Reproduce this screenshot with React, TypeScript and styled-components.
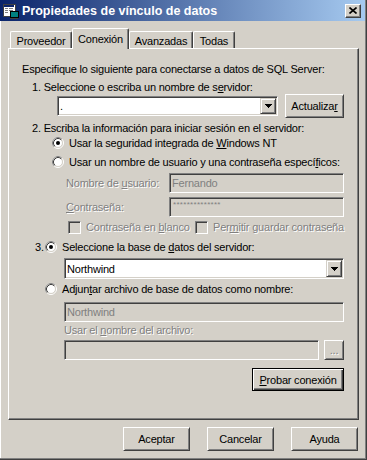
import React from 'react';
import styled, { createGlobalStyle, css } from 'styled-components';

const GlobalStyle = createGlobalStyle`
  html, body {
    margin: 0;
    padding: 0;
    background: #d4d0c8;
  }
  body {
    font-family: "Liberation Sans", Arial, sans-serif;
    font-size: 11px;
    letter-spacing: -0.2px;
    color: #000;
  }
  * {
    box-sizing: border-box;
  }
  svg {
    flex-shrink: 0;
  }
`;

const disabledText = css`
  color: #808080;
  text-shadow: 1px 1px 0 #fff;
`;

const sunken = css`
  border: 1px solid;
  border-color: #808080 #fff #fff #808080;
  box-shadow: inset 1px 1px #404040, inset -1px -1px #d4d0c8;
`;

const raised = css`
  border: 1px solid;
  border-color: #d4d0c8 #404040 #404040 #d4d0c8;
  box-shadow: inset 1px 1px #fff, inset -1px -1px #808080;
  background: #d4d0c8;
`;

const Window = styled.div`
  width: 367px;
  height: 460px;
  display: flex;
  flex-direction: column;
  background: #d4d0c8;
  border-right: 1px solid #404040;
  border-bottom: 1px solid #404040;
  box-shadow: inset -1px -1px #808080, inset 1px 0 #fff;
  overflow: hidden;
`;

const TitleBar = styled.div`
  height: 21px;
  margin-right: 1px;
  display: flex;
  align-items: center;
  gap: 3px;
  padding: 0 4px 0 3px;
  background: linear-gradient(to right, #0a246a, #a6caf0);
  color: #fff;
  font-weight: bold;
  font-size: 12.5px;
  letter-spacing: 0;
`;

const TitleText = styled.span`
  flex: 1;
  white-space: nowrap;
`;

const CloseButton = styled.span`
  width: 16px;
  height: 14px;
  border: 1px solid;
  border-color: #fff #404040 #404040 #fff;
  box-shadow: inset -1px -1px #808080;
  background: #d4d0c8;
  display: flex;
  align-items: center;
  justify-content: center;
`;

const Body = styled.div`
  flex: 1;
  display: flex;
  flex-direction: column;
  padding: 7px 7px 0 8px;
`;

const TabStrip = styled.div`
  height: 20px;
  display: flex;
  align-items: flex-end;
  padding-left: 2px;
`;

const Tab = styled.div<{ $w: number; $active?: boolean }>`
  position: relative;
  width: ${p => p.$w}px;
  height: ${p => (p.$active ? 21 : 17)}px;
  margin-bottom: ${p => (p.$active ? -1 : 0)}px;
  z-index: ${p => (p.$active ? 1 : 0)};
  padding-top: ${p => (p.$active ? 3 : 2)}px;
  line-height: 14px;
  text-align: center;
  background: #d4d0c8;
  border-top: 1px solid #fff;
  border-left: 1px solid #fff;
  border-right: 1px solid #404040;
  border-radius: 2px 2px 0 0;
  box-shadow: inset -1px 0 #808080;
`;

const Panel = styled.div`
  height: 372px;
  display: flex;
  flex-direction: column;
  padding: 0 14px 0 13px;
  border: 1px solid;
  border-color: #fff #404040 #404040 #fff;
  box-shadow: inset -1px -1px #808080;
`;

const Label = styled.div<{ $indent?: number; $mt?: number; $disabled?: boolean }>`
  height: 14px;
  line-height: 14px;
  margin-top: ${p => p.$mt ?? 0}px;
  padding-left: ${p => p.$indent ?? 0}px;
  white-space: nowrap;
  ${p => p.$disabled && disabledText}
`;

const FieldRow = styled.div<{ $indent?: number; $mt?: number; $h: number; $gap?: number }>`
  display: flex;
  align-items: center;
  gap: ${p => p.$gap ?? 0}px;
  height: ${p => p.$h}px;
  margin-top: ${p => p.$mt ?? 0}px;
  padding-left: ${p => p.$indent ?? 0}px;
  white-space: nowrap;
`;

const FieldLabel = styled.span<{ $w: number }>`
  width: ${p => p.$w}px;
  flex-shrink: 0;
  ${disabledText}
`;

const TextBox = styled.div<{ $w: number; $h: number; $disabled?: boolean }>`
  ${sunken}
  flex-shrink: 0;
  width: ${p => p.$w}px;
  height: ${p => p.$h}px;
  display: flex;
  align-items: center;
  padding: 1px;
  background: ${p => (p.$disabled ? '#d4d0c8' : '#fff')};
  ${p => p.$disabled && 'color: #808080;'}
`;

const BoxText = styled.span`
  padding-left: 1px;
  flex: 1;
`;

const Stars = styled.span`
  padding-left: 2px;
  font-size: 8px;
  letter-spacing: 0.3px;
  align-self: flex-start;
  margin-top: 1px;
  color: #808080;
`;

const DropButton = styled.span`
  ${raised}
  width: 16px;
  align-self: stretch;
  display: flex;
  align-items: center;
  justify-content: center;
`;

const Button = styled.button<{ $w: number; $h?: number; $default?: boolean; $disabled?: boolean }>`
  flex-shrink: 0;
  width: ${p => p.$w}px;
  height: ${p => p.$h ?? 23}px;
  padding: 0;
  font: inherit;
  letter-spacing: inherit;
  color: ${p => (p.$disabled ? '#808080' : '#000')};
  background: #d4d0c8;
  border: 1px solid;
  border-color: #fff #404040 #404040 #fff;
  box-shadow: inset 1px 1px #d4d0c8, inset -1px -1px #808080;
  ${p => p.$disabled && 'text-shadow: 1px 1px 0 #fff;'}
  ${p =>
    p.$default &&
    css`
      border-color: #000;
      box-shadow: inset 1px 1px #fff, inset -1px -1px #404040, inset -2px -2px #808080;
    `}
`;

const RadioRow = styled.div<{ $indent: number; $mt?: number }>`
  display: flex;
  align-items: center;
  height: 14px;
  margin-top: ${p => p.$mt ?? 0}px;
  padding-left: ${p => p.$indent}px;
  white-space: nowrap;
  gap: 5px;
`;

const StepNumber = styled.span`
  width: 10px;
  margin-right: -5px;
`;

const CheckRow = styled.div<{ $indent: number; $mt?: number }>`
  display: flex;
  align-items: center;
  height: 14px;
  margin-top: ${p => p.$mt ?? 0}px;
  padding-left: ${p => p.$indent}px;
  white-space: nowrap;
`;

const CheckItem = styled.label<{ $w?: number }>`
  display: flex;
  align-items: center;
  gap: 5px;
  flex-shrink: 0;
  ${p => p.$w && `width: ${p.$w}px;`}
  ${disabledText}
`;

const CheckBox = styled.span<{ $disabled?: boolean }>`
  ${sunken}
  flex-shrink: 0;
  width: 13px;
  height: 13px;
  background: ${p => (p.$disabled ? '#d4d0c8' : '#fff')};
`;

const ActionRow = styled.div<{ $mt: number }>`
  display: flex;
  justify-content: flex-end;
  margin-top: ${p => p.$mt}px;
`;

const Footer = styled.div`
  display: flex;
  justify-content: flex-end;
  gap: 17px;
  margin-top: 7px;
  padding-right: 1px;
`;

const Arrow = () => (
  <svg width="7" height="4" viewBox="0 0 7 4" shapeRendering="crispEdges">
    <rect x="0" y="0" width="7" height="1" fill="#000" />
    <rect x="1" y="1" width="5" height="1" fill="#000" />
    <rect x="2" y="2" width="3" height="1" fill="#000" />
    <rect x="3" y="3" width="1" height="1" fill="#000" />
  </svg>
);

const Radio: React.FC<{ checked?: boolean }> = ({ checked }) => (
  <svg width="12" height="12" viewBox="0 0 12 12">
    <circle cx="6" cy="6" r="4.5" fill="#fff" />
    <circle cx="6" cy="6" r="5.5" fill="none" stroke="#fff" />
    <path d="M2.11 9.89A5.5 5.5 0 0 1 9.89 2.11" fill="none" stroke="#808080" />
    <circle cx="6" cy="6" r="4.5" fill="none" stroke="#d4d0c8" />
    <path d="M2.82 9.18A4.5 4.5 0 0 1 9.18 2.82" fill="none" stroke="#404040" />
    {checked && <circle cx="6" cy="6" r="2" fill="#000" />}
  </svg>
);

const AppIcon = () => (
  <svg width="16" height="16" viewBox="0 0 16 16" shapeRendering="crispEdges">
    <rect x="0" y="1" width="12" height="12" fill="#fff" stroke="#404040" />
    <rect x="1" y="2" width="10" height="2" fill="#0a246a" />
    <rect x="2" y="5" width="3" height="1" fill="#808080" />
    <rect x="6" y="5" width="4" height="1" fill="#808080" />
    <rect x="2" y="7" width="3" height="1" fill="#808080" />
    <rect x="6" y="7" width="4" height="1" fill="#808080" />
    <rect x="2" y="9" width="3" height="1" fill="#808080" />
    <rect x="7" y="8" width="8" height="6" fill="#008080" stroke="#000" />
    <rect x="9" y="14" width="4" height="1" fill="#000" />
    <rect x="7" y="15" width="8" height="1" fill="#404040" />
  </svg>
);

const CloseGlyph = () => (
  <svg width="8" height="7" viewBox="0 0 8 7">
    <path d="M0.5 0.5L7.5 6.5M7.5 0.5L0.5 6.5" stroke="#000" strokeWidth="1.6" />
  </svg>
);

const App: React.FC = () => {
  return (
    <>
      <GlobalStyle />
      <Window>
        <TitleBar>
          <AppIcon />
          <TitleText>Propiedades de vínculo de datos</TitleText>
          <CloseButton>
            <CloseGlyph />
          </CloseButton>
        </TitleBar>

        <Body>
          <TabStrip>
            <Tab $w={62}>Proveedor</Tab>
            <Tab $w={57} $active>Conexión</Tab>
            <Tab $w={64}>Avanzadas</Tab>
            <Tab $w={42}>Todas</Tab>
          </TabStrip>

          <Panel>
            <Label $mt={13}>Especifique lo siguiente para conectarse a datos de SQL Server:</Label>
            <Label $indent={10} $mt={4}>
              1. Seleccione o escriba un nombre de s<u>e</u>rvidor:
            </Label>
            <FieldRow $indent={35} $h={24} $gap={7}>
              <TextBox $w={221} $h={20}>
                <BoxText>.</BoxText>
                <DropButton>
                  <Arrow />
                </DropButton>
              </TextBox>
              <Button $w={59} $h={24}>
                Actualiza<u>r</u>
              </Button>
            </FieldRow>

            <Label $indent={10} $mt={3}>
              2. Escriba la información para iniciar sesión en el servidor:
            </Label>
            <RadioRow $indent={30} $mt={1}>
              <Radio checked />
              <span>
                Usar la seguridad integrada de <u>W</u>indows NT
              </span>
            </RadioRow>
            <RadioRow $indent={30} $mt={5}>
              <Radio />
              <span>
                Usar un nombre de usuario y una contraseña especí<u>f</u>icos:
              </span>
            </RadioRow>
            <FieldRow $indent={44} $h={20} $mt={4}>
              <FieldLabel $w={103}>
                Nombre de <u>u</u>suario:
              </FieldLabel>
              <TextBox $w={175} $h={20} $disabled>
                <BoxText>Fernando</BoxText>
              </TextBox>
            </FieldRow>
            <FieldRow $indent={44} $h={20} $mt={4}>
              <FieldLabel $w={103}>
                <u>C</u>ontraseña:
              </FieldLabel>
              <TextBox $w={175} $h={20} $disabled>
                <Stars>**************</Stars>
              </TextBox>
            </FieldRow>
            <CheckRow $indent={46} $mt={3}>
              <CheckItem $w={127}>
                <CheckBox $disabled />
                <span>
                  Contraseña en <u>b</u>lanco
                </span>
              </CheckItem>
              <CheckItem>
                <CheckBox $disabled />
                <span>
                  Per<u>m</u>itir guardar contraseña
                </span>
              </CheckItem>
            </CheckRow>

            <RadioRow $indent={13} $mt={6}>
              <StepNumber>3.</StepNumber>
              <Radio checked />
              <span>
                Seleccione la base de <u>d</u>atos del servidor:
              </span>
            </RadioRow>
            <FieldRow $indent={42} $h={21} $mt={4}>
              <TextBox $w={280} $h={21}>
                <BoxText>Northwind</BoxText>
                <DropButton>
                  <Arrow />
                </DropButton>
              </TextBox>
            </FieldRow>
            <RadioRow $indent={23} $mt={3}>
              <Radio />
              <span>
                Adjun<u>t</u>ar archivo de base de datos como nombre:
              </span>
            </RadioRow>
            <FieldRow $indent={42} $h={20} $mt={6}>
              <TextBox $w={280} $h={20} $disabled>
                <BoxText>Northwind</BoxText>
              </TextBox>
            </FieldRow>
            <Label $indent={42} $mt={1} $disabled>
              Usar el <u>n</u>ombre del archivo:
            </Label>
            <FieldRow $indent={42} $h={20} $mt={3} $gap={5}>
              <TextBox $w={255} $h={20} $disabled />
              <Button $w={20} $h={20} $disabled>
                ...
              </Button>
            </FieldRow>
            <ActionRow $mt={8}>
              <Button $w={92} $h={23} $default>
                <u>P</u>robar conexión
              </Button>
            </ActionRow>
          </Panel>

          <Footer>
            <Button $w={67} $h={24}>Aceptar</Button>
            <Button $w={67} $h={24}>Cancelar</Button>
            <Button $w={67} $h={24}>Ayuda</Button>
          </Footer>
        </Body>
      </Window>
    </>
  );
};

export default App;
